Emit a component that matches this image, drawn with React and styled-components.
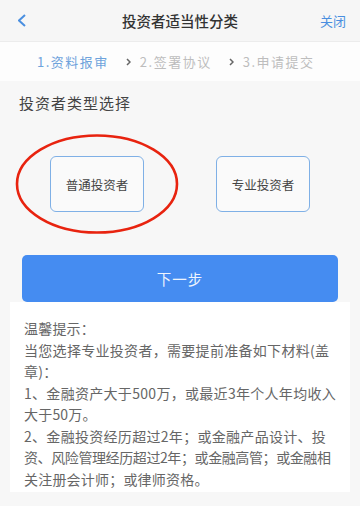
import React from "react";
import styled, { createGlobalStyle } from "styled-components";

const Global = createGlobalStyle`
  html, body { margin: 0; padding: 0; background: #f7f7f7; }
  body { font-family: "Noto Sans CJK SC", "Noto Sans", sans-serif; width: 360px; height: 506px; overflow: hidden; }
  * { box-sizing: border-box; }
`;

const Page = styled.div`
  width: 360px;
  height: 506px;
  background: #f7f7f7;
  display: flex;
  flex-direction: column;
`;

const Header = styled.div`
  height: 42px;
  background: #f6f6f6;
  border-bottom: 1px solid #ececec;
  display: grid;
  grid-template-columns: 60px 1fr 60px;
  align-items: center;
`;

const Back = styled.div`
  padding-left: 18px;
  display: flex;
  align-items: center;
`;

const Title = styled.div`
  text-align: center;
  font-size: 14.5px;
  font-weight: 500;
  color: #333;
`;

const Close = styled.div`
  text-align: right;
  padding-right: 14px;
  font-size: 13px;
  color: #4a8fe0;
`;

const Steps = styled.div`
  height: 39px;
  background: #fdfdfd;
  display: flex;
  align-items: center;
  padding-left: 37px;
`;

const Step = styled.span`
  font-size: 13px;
  letter-spacing: 1.5px;
  white-space: nowrap;
  color: ${(p) => (p.$active ? "#6ea3dc" : "#bdbdbd")};
`;

const Sep = styled.span`
  display: inline-flex;
  margin: 0 9px 0 17px;
`;

const Section = styled.div`
  padding: 12px 0 0;
`;

const SectionTitle = styled.div`
  padding-left: 19px;
  font-size: 15px;
  line-height: 20px;
  letter-spacing: 1px;
  color: #444;
`;

const CardRow = styled.div`
  position: relative;
  margin-top: 43px;
  display: flex;
  justify-content: center;
  gap: 72px;
`;

const TypeCard = styled.div`
  width: 94px;
  height: 56px;
  border: 1.5px solid #7fb0e6;
  border-radius: 6px;
  background: #fafafa;
  display: flex;
  align-items: center;
  justify-content: center;
  font-size: 12.5px;
  color: #444;
`;

const Circle = styled.svg`
  position: absolute;
  left: 14px;
  top: -23px;
  width: 166px;
  height: 102px;
  pointer-events: none;
`;

const NextButton = styled.div`
  margin: 43px 22px 0;
  height: 47px;
  border-radius: 5px;
  background: #458cf1;
  color: #eef4fd;
  font-size: 14.5px;
  letter-spacing: 1px;
  display: flex;
  align-items: center;
  justify-content: center;
`;

const Tips = styled.div`
  margin: 0 10px;
  background: #ffffff;
  padding: 16px 8px 2px 14px;
  font-size: 14px;
  line-height: 21.5px;
  color: #666;
`;

const TipLine = styled.div`
  white-space: nowrap;
  letter-spacing: ${(p) => p.$ls || "0.2px"};
`;

const Chevron = ({ color = "#777", w = 6, h = 9, sw = 1.6, dir = "right" }) => (
  <svg width={w} height={h} viewBox={`0 0 ${w} ${h}`}>
    {dir === "right" ? (
      <polyline points={`1,1 ${w - 1},${h / 2} 1,${h - 1}`} fill="none" stroke={color} strokeWidth={sw} />
    ) : (
      <polyline points={`${w - 1},1 1,${h / 2} ${w - 1},${h - 1}`} fill="none" stroke={color} strokeWidth={sw} />
    )}
  </svg>
);

const tipLines = [
  ["温馨提示：", "0.2px"],
  ["当您选择专业投资者，需要提前准备如下材料(盖", "0.3px"],
  ["章)：", "0.2px"],
  ["1、金融资产大于500万，或最近3年个人年均收入", "0.3px"],
  ["大于50万。", "0.2px"],
  ["2、金融投资经历超过2年；或金融产品设计、投", "0.3px"],
  ["资、风险管理经历超过2年；或金融高管；或金融相", "-0.4px"],
  ["关注册会计师；或律师资格。", "0.2px"],
];

export default function App() {
  return (
    <>
      <Global />
      <Page>
        <Header>
          <Back>
            <Chevron dir="left" w={8} h={13} sw={2} color="#4a8fe0" />
          </Back>
          <Title>投资者适当性分类</Title>
          <Close>关闭</Close>
        </Header>
        <Steps>
          <Step $active>1.资料报审</Step>
          <Sep>
            <Chevron w={5} h={8} sw={1.5} color="#666" />
          </Sep>
          <Step>2.签署协议</Step>
          <Sep>
            <Chevron w={5} h={8} sw={1.5} color="#666" />
          </Sep>
          <Step>3.申请提交</Step>
        </Steps>
        <Section>
          <SectionTitle>投资者类型选择</SectionTitle>
          <CardRow>
            <TypeCard>普通投资者</TypeCard>
            <TypeCard>专业投资者</TypeCard>
            <Circle viewBox="0 0 166 102">
              <ellipse cx="83" cy="51" rx="80" ry="48.5" fill="none" stroke="#e8230f" strokeWidth="2.6" />
            </Circle>
          </CardRow>
          <NextButton>下一步</NextButton>
          <Tips>
            {tipLines.map(([t, ls], i) => (
              <TipLine key={i} $ls={ls}>
                {t}
              </TipLine>
            ))}
          </Tips>
        </Section>
      </Page>
    </>
  );
}
